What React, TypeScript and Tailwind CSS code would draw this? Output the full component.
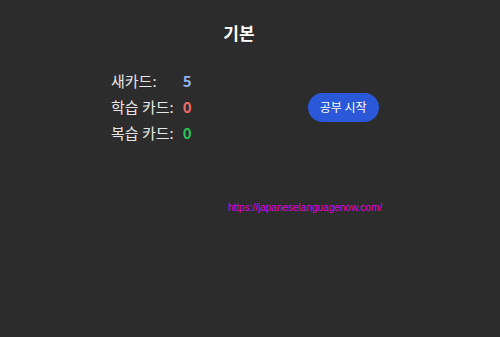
import React from 'react';

const font = { fontFamily: '"Noto Sans CJK KR", "Noto Sans", sans-serif' };

const rows = [
  { label: '새카드:', count: 5, color: 'text-[#93b4f0]' },
  { label: '학습 카드:', count: 0, color: 'text-[#f06a6a]' },
  { label: '복습 카드:', count: 0, color: 'text-[#2cc25a]' },
];

const App: React.FC = () => {
  return (
    <div className="h-[337px] w-[500px] bg-[#2c2c2c] text-[#e6e6e6]" style={font}>
      <h1 className="pt-[20px] pr-[22px] text-center text-[17px] font-bold leading-[26px] text-white">기본</h1>

      <div className="mt-[22px] flex items-center pl-[111px]">
        <div className="grid grid-cols-[auto_auto] gap-x-[9px]">
          {rows.map((row) => (
            <React.Fragment key={row.label}>
              <div className="h-[26px] text-[15px] leading-[26px]">{row.label}</div>
              <div className={`h-[26px] text-[15px] font-bold leading-[26px] ${row.color}`}>{row.count}</div>
            </React.Fragment>
          ))}
        </div>
        <button className="ml-[116px] h-[29px] w-[71px] rounded-full bg-[#2a58d8] text-[12px] text-white">
          공부 시작
        </button>
      </div>

      <div className="mt-[46px] pl-[228px]">
        <a className="text-[10px] leading-4 text-[#e000e0]" style={{ fontFamily: '"Liberation Sans", Arial, sans-serif' }}>
          https://japaneselanguagenow.com/
        </a>
      </div>
    </div>
  );
};

export default App;
